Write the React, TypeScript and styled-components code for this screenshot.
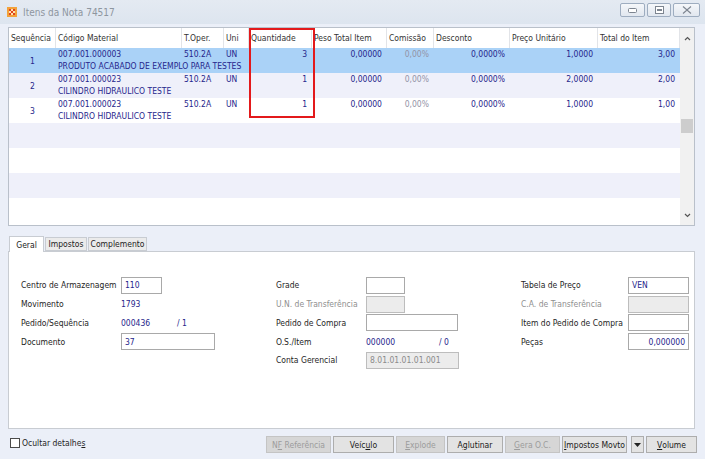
import React from "react";
import styled, { createGlobalStyle } from "styled-components";

const GlobalStyle = createGlobalStyle`
  html, body {
    margin: 0;
    padding: 0;
    background: #ebeff8;
  }
  body {
    font-family: "DejaVu Sans Condensed", "DejaVu Sans", "Liberation Sans", sans-serif;
    font-stretch: condensed;
    font-size: 8.5px;
    color: #1c1c1c;
  }
`;

const NAVY = "#26268c";

const Window = styled.div`
  width: 705px;
  height: 459px;
  background: #ebeff8;
  display: flex;
  flex-direction: column;
  overflow: hidden;
  position: relative;
`;

const TitleBar = styled.div`
  height: 24px;
  display: flex;
  align-items: center;
  padding: 0 5px 0 7px;
  background: linear-gradient(#e4eaf2, #dde5ef);
  box-sizing: border-box;
`;

const Title = styled.span`
  margin-left: 6px;
  font-size: 10px;
  color: #8e969f;
  flex: 1;
  padding-top: 1px;
`;

const WinButtons = styled.div`
  display: flex;
  gap: 2px;
  margin-top: -4px;
`;

const WinButton = styled.div<{ $w: number }>`
  width: ${(p) => p.$w}px;
  height: 14px;
  box-sizing: border-box;
  border: 1px solid #9eadc0;
  border-radius: 2px;
  background: linear-gradient(#f5f7fa, #e1e7ef);
  display: flex;
  align-items: center;
  justify-content: center;
`;

const Body = styled.div`
  flex: 1;
  display: flex;
  flex-direction: column;
  padding: 3px 10px 0 8px;
`;

/* ---------- grid ---------- */

const GridBox = styled.div`
  height: 199px;
  box-sizing: border-box;
  border: 1px solid #b9c0ca;
  background: #fff;
  display: flex;
  position: relative;
`;

const GridMain = styled.div`
  flex: 1;
  display: flex;
  flex-direction: column;
`;

const HeaderRow = styled.div<{ $cols: string }>`
  display: grid;
  grid-template-columns: ${(p) => p.$cols};
  height: 20px;
  background: #fff;
`;

const HeaderCell = styled.div`
  display: flex;
  align-items: center;
  padding-left: 2px;
  border-right: 1px solid #e2e4e8;
  color: #333;
  white-space: nowrap;
  overflow: hidden;
  box-sizing: border-box;
`;

const Row = styled.div<{ $cols: string; $bg: string }>`
  display: grid;
  grid-template-columns: ${(p) => p.$cols};
  grid-template-rows: 12px 12px;
  height: 25px;
  padding-top: 0px;
  background: ${(p) => p.$bg};
  color: ${NAVY};
  box-sizing: border-box;
`;

const Cell = styled.div<{ $align?: string; $muted?: boolean }>`
  grid-row: 1;
  display: flex;
  align-items: center;
  justify-content: ${(p) =>
    p.$align === "right" ? "flex-end" : p.$align === "center" ? "center" : "flex-start"};
  padding: 0 ${(p) => (p.$align === "right" ? "5px" : "2px")};
  color: ${(p) => (p.$muted ? "#9393a6" : NAVY)};
  white-space: nowrap;
`;

const SeqCell = styled(Cell)`
  grid-row: 1 / 3;
  padding-top: 1px;
`;

const Description = styled.div`
  grid-row: 2;
  grid-column: 2 / -1;
  display: flex;
  align-items: center;
  padding-left: 2px;
  white-space: nowrap;
`;

const ScrollBar = styled.div`
  width: 14px;
  background: #f1f1f1;
  display: flex;
  flex-direction: column;
  align-items: center;
`;

const ScrollArrow = styled.div`
  height: 20px;
  width: 100%;
  display: flex;
  align-items: center;
  justify-content: center;
`;

const ScrollTrack = styled.div`
  flex: 1;
  width: 100%;
`;

const Thumb = styled.div`
  width: 12px;
  height: 14px;
  margin: 71px auto 0;
  background: #cdcdcd;
`;

const Highlight = styled.div`
  position: absolute;
  left: 240px;
  top: 0px;
  width: 66px;
  height: 90px;
  box-sizing: border-box;
  border: 2px solid #e3191b;
  pointer-events: none;
`;

/* ---------- tabs ---------- */

const TabStrip = styled.div`
  margin-top: 10px;
  display: flex;
  align-items: flex-end;
  height: 15px;
  padding-left: 1px;
`;

const Tab = styled.div<{ $active?: boolean; $w: number }>`
  width: ${(p) => p.$w}px;
  height: ${(p) => (p.$active ? 16 : 14)}px;
  margin-bottom: ${(p) => (p.$active ? -1 : 0)}px;
  box-sizing: border-box;
  border: 1px solid #c8ccd2;
  border-bottom: ${(p) => (p.$active ? "none" : "1px solid #c8ccd2")};
  background: ${(p) => (p.$active ? "#fff" : "#ebebeb")};
  display: flex;
  align-items: center;
  justify-content: center;
  color: #222;
  z-index: ${(p) => (p.$active ? 1 : 0)};
  margin-right: 1px;
`;

const Panel = styled.div`
  height: 178px;
  box-sizing: border-box;
  border: 1px solid #c8ccd2;
  background: #fff;
  padding: 24px 0 0 12px;
  display: grid;
  grid-template-columns: 255px 245px 1fr;
  align-items: start;
`;

const FieldGroup = styled.div<{ $label: number }>`
  display: grid;
  grid-template-columns: ${(p) => p.$label}px 1fr;
  grid-auto-rows: 18.75px;
  align-items: center;
`;

const Label = styled.div<{ $disabled?: boolean }>`
  color: ${(p) => (p.$disabled ? "#8f8f8f" : "#1e1e1e")};
  white-space: nowrap;
`;

const Input = styled.div<{ $w: number; $disabled?: boolean; $right?: boolean }>`
  width: ${(p) => p.$w}px;
  height: 17px;
  box-sizing: border-box;
  border: 1px solid ${(p) => (p.$disabled ? "#bdbdbd" : "#a9a9a9")};
  background: ${(p) => (p.$disabled ? "#ececec" : "#fff")};
  color: ${(p) => (p.$disabled ? "#8a8a8a" : NAVY)};
  display: flex;
  align-items: center;
  justify-content: ${(p) => (p.$right ? "flex-end" : "flex-start")};
  padding: 0 3px;
`;

const Value = styled.div<{ $w?: number }>`
  color: ${NAVY};
  width: ${(p) => (p.$w ? `${p.$w}px` : "auto")};
  flex-shrink: 0;
`;

const Pair = styled.div`
  display: flex;
  align-items: center;
`;

/* ---------- footer ---------- */

const Footer = styled.div`
  display: flex;
  align-items: flex-start;
  justify-content: space-between;
  padding-top: 7px;
  padding-left: 2px;
`;

const CheckLabel = styled.label`
  display: flex;
  align-items: center;
  gap: 2px;
  margin-top: 2px;
  color: #1e1e1e;
`;

const CheckBox = styled.span`
  width: 10px;
  height: 10px;
  box-sizing: border-box;
  border: 1px solid #4a4a4a;
  background: #fff;
`;

const Buttons = styled.div`
  display: flex;
  gap: 2px;
  margin-right: -2px;
`;

const Button = styled.div<{ $w: number; $disabled?: boolean; $gapLeft?: number }>`
  width: ${(p) => p.$w}px;
  height: 17px;
  margin-left: ${(p) => p.$gapLeft ?? 0}px;
  box-sizing: border-box;
  border: 1px solid ${(p) => (p.$disabled ? "#c4c4c4" : "#adadad")};
  background: ${(p) => (p.$disabled ? "#d6d6d6" : "#e3e3e3")};
  color: ${(p) => (p.$disabled ? "#9c9c9c" : "#1a1a1a")};
  display: flex;
  align-items: center;
  justify-content: center;
  white-space: nowrap;

  u {
    text-underline-offset: 1px;
  }
`;

/* ---------- data ---------- */

type Col = { title: string; width: number; align?: "right" | "center"; muted?: boolean };

const columns: Col[] = [
  { title: "Sequência", width: 47, align: "center" },
  { title: "Código Material", width: 126 },
  { title: "T.Oper.", width: 42 },
  { title: "Uni", width: 25 },
  { title: "Quantidade", width: 63, align: "right" },
  { title: "Peso Total Item", width: 75, align: "right" },
  { title: "Comissão", width: 47, align: "right", muted: true },
  { title: "Desconto", width: 76, align: "right" },
  { title: "Preço Unitário", width: 88, align: "right" },
  { title: "Total do Item", width: 82, align: "right" },
];

const colTemplate = columns.map((c) => `${c.width}px`).join(" ");

const items = [
  {
    seq: "1",
    code: "007.001.000003",
    desc: "PRODUTO ACABADO DE EXEMPLO PARA TESTES",
    values: ["510.2A", "UN", "3", "0,00000", "0,00%", "0,0000%", "1,0000", "3,00"],
  },
  {
    seq: "2",
    code: "007.001.000023",
    desc: "CILINDRO HIDRAULICO TESTE",
    values: ["510.2A", "UN", "1", "0,00000", "0,00%", "0,0000%", "2,0000", "2,00"],
  },
  {
    seq: "3",
    code: "007.001.000023",
    desc: "CILINDRO HIDRAULICO TESTE",
    values: ["510.2A", "UN", "1", "0,00000", "0,00%", "0,0000%", "1,0000", "1,00"],
  },
];

const rowBg = (i: number) => (i === 0 ? "#aad2f7" : i % 2 === 1 ? "#eff0fa" : "#fff");

const AppIcon = () => (
  <svg width="10" height="10" viewBox="0 0 10 10">
    <rect x="0" y="0" width="10" height="10" fill="#f3a23a" />
    <path d="M2 2h2v2H2zM6 2h2v2H6zM4 4h2v2H4zM2 6h2v2H2zM6 6h2v2H6z" fill="#e0431c" />
    <path d="M4 2h2v2H4zM2 4h2v2H2zM6 4h2v2H6zM4 6h2v2H4z" fill="#fde3b0" />
  </svg>
);

const Chevron = ({ down }: { down?: boolean }) => (
  <svg width="7" height="5" viewBox="0 0 7 5">
    <path
      d={down ? "M1 1l2.5 2.5L6 1" : "M1 4l2.5-2.5L6 4"}
      stroke="#555"
      strokeWidth="1.2"
      fill="none"
    />
  </svg>
);

export default function App() {
  return (
    <>
      <GlobalStyle />
      <Window>
        <TitleBar>
          <AppIcon />
          <Title>Itens da Nota 74517</Title>
          <WinButtons>
            <WinButton $w={25}>
              <svg width="9" height="5" viewBox="0 0 9 5">
                <rect x="0.5" y="0.5" width="8" height="4" rx="1" fill="#fff" stroke="#7d8590" />
              </svg>
            </WinButton>
            <WinButton $w={24}>
              <svg width="9" height="8" viewBox="0 0 9 8">
                <rect x="0.5" y="0.5" width="8" height="7" fill="#fff" stroke="#7d8590" />
                <rect x="2" y="3" width="5" height="2" fill="#7d8590" />
              </svg>
            </WinButton>
            <WinButton $w={27}>
              <svg width="10" height="8" viewBox="0 0 10 8">
                <path d="M1 0.5l4 3.5 4-3.5M1 7.5l4-3.5 4 3.5" stroke="#7d8590" strokeWidth="1.1" fill="none" />
              </svg>
            </WinButton>
          </WinButtons>
        </TitleBar>

        <Body>
          <GridBox>
            <GridMain>
              <HeaderRow $cols={colTemplate}>
                {columns.map((c) => (
                  <HeaderCell key={c.title}>{c.title}</HeaderCell>
                ))}
              </HeaderRow>
              {items.map((it, i) => (
                <Row key={i} $cols={colTemplate} $bg={rowBg(i)}>
                  <SeqCell $align="center">{it.seq}</SeqCell>
                  <Cell>{it.code}</Cell>
                  {it.values.map((v, j) => (
                    <Cell key={j} $align={columns[j + 2].align} $muted={columns[j + 2].muted}>
                      {v}
                    </Cell>
                  ))}
                  <Description>{it.desc}</Description>
                </Row>
              ))}
              {[3, 4, 5, 6].map((i) => (
                <Row key={i} $cols={colTemplate} $bg={rowBg(i)} />
              ))}
            </GridMain>
            <ScrollBar>
              <ScrollArrow>
                <Chevron />
              </ScrollArrow>
              <ScrollTrack>
                <Thumb />
              </ScrollTrack>
              <ScrollArrow>
                <Chevron down />
              </ScrollArrow>
            </ScrollBar>
            <Highlight />
          </GridBox>

          <TabStrip>
            <Tab $active $w={35}>Geral</Tab>
            <Tab $w={42}>Impostos</Tab>
            <Tab $w={59}>Complemento</Tab>
          </TabStrip>
          <Panel>
            <FieldGroup $label={100}>
              <Label>Centro de Armazenagem</Label>
              <Input $w={41}>110</Input>
              <Label>Movimento</Label>
              <Value>1793</Value>
              <Label>Pedido/Sequência</Label>
              <Pair>
                <Value $w={56}>000436</Value>
                <Value>/ 1</Value>
              </Pair>
              <Label>Documento</Label>
              <Input $w={94}>37</Input>
            </FieldGroup>

            <FieldGroup $label={90}>
              <Label>Grade</Label>
              <Input $w={39} />
              <Label $disabled>U.N. de Transferência</Label>
              <Input $w={39} $disabled />
              <Label>Pedido de Compra</Label>
              <Input $w={92} />
              <Label>O.S./Item</Label>
              <Pair>
                <Value $w={73}>000000</Value>
                <Value>/ 0</Value>
              </Pair>
              <Label>Conta Gerencial</Label>
              <Input $w={93} $disabled>
                8.01.01.01.01.001
              </Input>
            </FieldGroup>

            <FieldGroup $label={107}>
              <Label>Tabela de Preço</Label>
              <Input $w={61}>VEN</Input>
              <Label $disabled>C.A. de Transferência</Label>
              <Input $w={61} $disabled />
              <Label>Item do Pedido de Compra</Label>
              <Input $w={61} />
              <Label>Peças</Label>
              <Input $w={61} $right>
                0,000000
              </Input>
            </FieldGroup>
          </Panel>

          <Footer>
            <CheckLabel>
              <CheckBox />
              <span>
                Ocultar detalhe<u>s</u>
              </span>
            </CheckLabel>
            <Buttons>
              <Button $w={65} $disabled>
                N<u>F</u>&nbsp;Referência
              </Button>
              <Button $w={61}>
                Veíc<u>u</u>lo
              </Button>
              <Button $w={49} $disabled>
                <u>E</u>xplode
              </Button>
              <Button $w={56}>
                A<u>g</u>lutinar
              </Button>
              <Button $w={55} $disabled>
                <u>G</u>era O.C.
              </Button>
              <Button $w={65}>
                <u>I</u>mpostos Movto
              </Button>
              <Button $w={13} $gapLeft={2}>
                <svg width="7" height="4" viewBox="0 0 7 4">
                  <path d="M0 0h7L3.5 4z" fill="#222" />
                </svg>
              </Button>
              <Button $w={51}>
                <u>V</u>olume
              </Button>
            </Buttons>
          </Footer>
        </Body>
      </Window>
    </>
  );
}
